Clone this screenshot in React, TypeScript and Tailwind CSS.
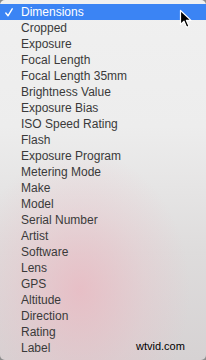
import React from 'react';

const items = [
  'Dimensions', 'Cropped', 'Exposure', 'Focal Length', 'Focal Length 35mm',
  'Brightness Value', 'Exposure Bias', 'ISO Speed Rating', 'Flash',
  'Exposure Program', 'Metering Mode', 'Make', 'Model', 'Serial Number',
  'Artist', 'Software', 'Lens', 'GPS', 'Altitude', 'Direction', 'Rating', 'Label',
];

function Cursor() {
  return (
    <svg width="14" height="20" viewBox="0 0 14 20" className="absolute left-[179px] top-[9px]">
      <path d="M1.5 1.5 L1.5 15.5 L5 12.2 L7.6 18.2 L10 17.2 L7.4 11.4 L12 11.4 Z" fill="#000" stroke="#fff" strokeWidth="1.2" strokeLinejoin="round" />
    </svg>
  );
}

export default function App() {
  return (
    <div className="relative w-[206px] h-[360px] overflow-hidden bg-[#8c8c8c] font-['Liberation_Sans',Arial,sans-serif]">
      <div className="absolute inset-0 rounded-[5px] bg-[linear-gradient(180deg,#f0f0f0_0%,#ededed_35%,#dedcdc_70%,#d6d2d3_100%)]" />
      <div className="absolute inset-0 rounded-[5px] bg-[radial-gradient(ellipse_110px_140px_at_80px_290px,rgba(236,180,190,0.7),rgba(236,190,198,0.3)_60%,rgba(236,200,205,0)_100%)]" />
      <div className="relative flex flex-col pt-[4px]">
        {items.map((name, i) => (
          <div
            key={name}
            className={`relative h-4 leading-4 pl-[21px] text-[12px] ${i === 0 ? 'bg-[#3b84f4] text-white' : 'text-[#3a3a3a]'}`}
          >
            {i === 0 && (
              <svg width="8" height="9" viewBox="0 0 8 9" className="absolute left-[5px] top-[4px]">
                <path d="M0.8 5 L3 7.8 L7.2 0.8" fill="none" stroke="#fff" strokeWidth="1.4" strokeLinecap="round" strokeLinejoin="round" />
              </svg>
            )}
            {name}
          </div>
        ))}
      </div>
      <Cursor />
      <div className="absolute left-[136px] top-[338px] text-[11px] leading-4 text-black">wtvid.com</div>
    </div>
  );
}
